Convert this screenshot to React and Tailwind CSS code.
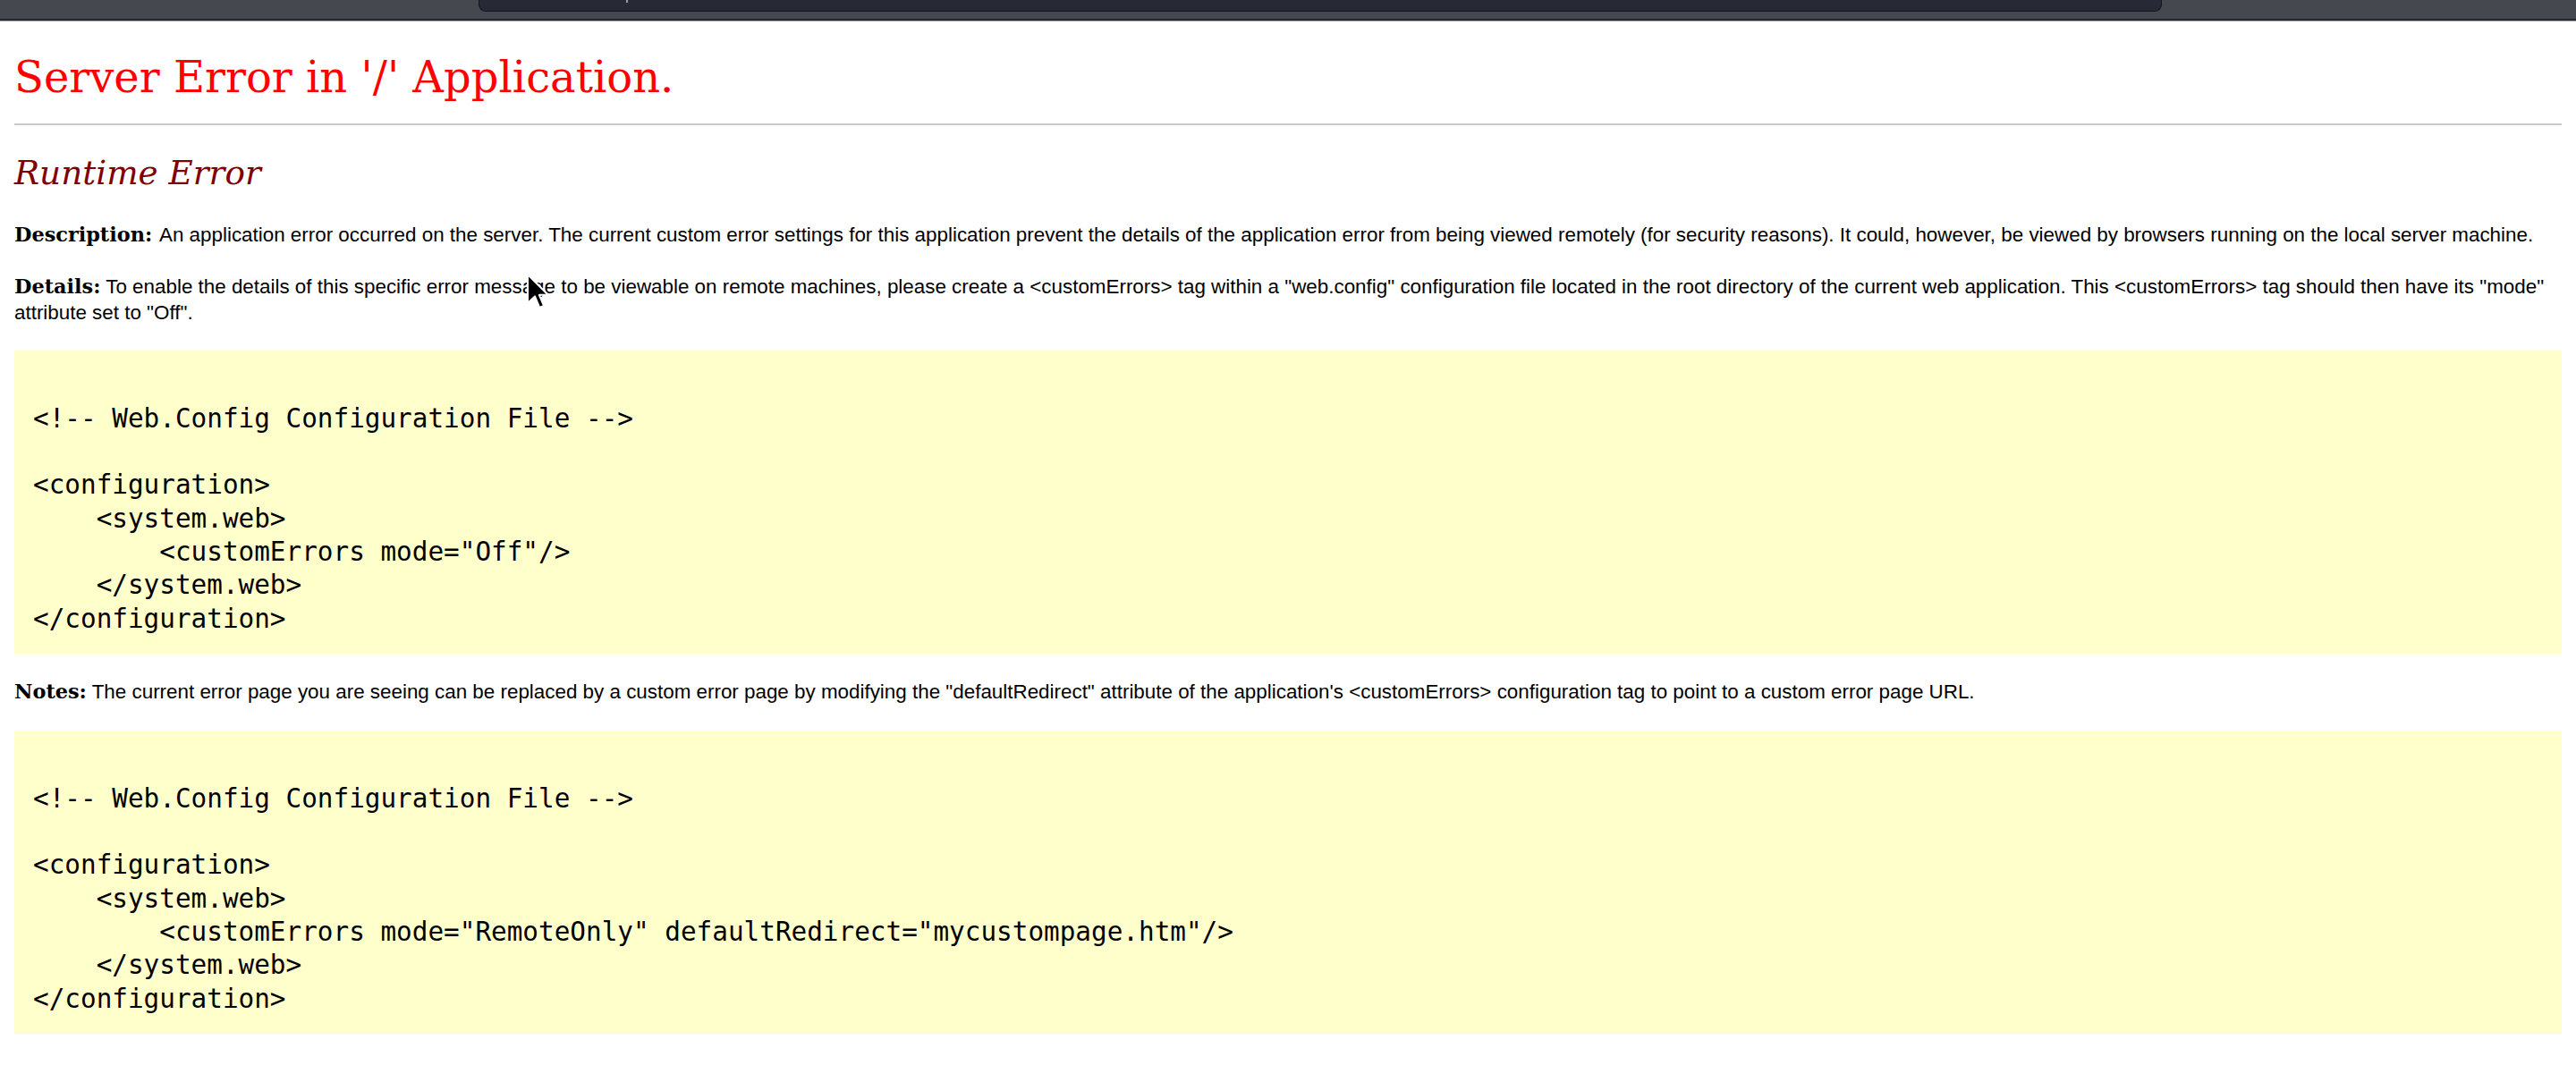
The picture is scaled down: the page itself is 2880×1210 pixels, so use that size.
import React from "react";

const code1 = [
  "",
  "<!-- Web.Config Configuration File -->",
  "",
  "<configuration>",
  "    <system.web>",
  '        <customErrors mode="Off"/>',
  "    </system.web>",
  "</configuration>",
];

const code2 = [
  "",
  "<!-- Web.Config Configuration File -->",
  "",
  "<configuration>",
  "    <system.web>",
  '        <customErrors mode="RemoteOnly" defaultRedirect="mycustompage.htm"/>',
  "    </system.web>",
  "</configuration>",
];

function CodeBlock({ lines }) {
  return (
    <div className="bg-[#ffffcc] pt-[20px] pb-[20px] pl-[21px] pr-[21px] font-['DejaVu_Sans_Mono',monospace] text-[29.33px] leading-[37.33px] text-black">
      {lines.map((l, i) => (
        <div key={i} className="h-[37.33px] whitespace-pre">
          {l}
        </div>
      ))}
    </div>
  );
}

function Label({ children }) {
  return <b className="font-['DejaVu_Serif',serif] font-bold text-black">{children}</b>;
}

export default function App() {
  return (
    <div className="relative min-h-screen w-full bg-white">
      {/* browser chrome remnant */}
      <div className="flex flex-col">
        <div className="flex h-[21px] items-start bg-[#45484f]">
          <div className="ml-[535px] h-[13px] w-[1882px] rounded-b-[8px] border border-t-0 border-[#15161b] bg-[#272a35]">
            <div className="ml-[164px] h-[3px] w-[2px] bg-[#9a9ca3]" />
          </div>
        </div>
        <div className="h-[2px] bg-[#26272c]" />
        <div className="h-[1px] bg-[#a3a3a3]" />
      </div>

      <div className="px-[16px]">
        <h1 className="pt-[34px] font-['DejaVu_Serif',serif] text-[48px] font-normal leading-[56px] text-[#ff0000]">
          Server Error in '/' Application.
        </h1>
        <div className="mt-[24px] h-[2px] w-full bg-[#c9c9c9]" />
        <h2 className="mt-[32.4px] h-[43.4px] font-['DejaVu_Serif',serif] text-[37.33px] font-normal leading-[43.4px] text-[#800000]">
          <i className="italic [font-synthesis:style]">Runtime Error</i>
        </h2>

        <div className="mt-[32.7px] font-['Liberation_Sans',Arial,sans-serif] text-[22.4px] leading-[28.4px] text-black">
          <p>
            <Label>Description: </Label>
            An application error occurred on the server. The current custom error settings for this application prevent the details of the application error from being viewed remotely (for security reasons). It could, however, be viewed by browsers running on the local server machine.
          </p>
          <div className="h-[28.4px]" />
          <p>
            <Label>Details:</Label> To enable the details of this specific error message to be viewable on remote machines, please create a &lt;customErrors&gt; tag within a "web.config" configuration file located in the root directory of the current web application. This &lt;customErrors&gt; tag should then have its "mode" attribute set to "Off".
          </p>
          <div className="h-[28.4px]" />
          <CodeBlock lines={code1} />
          <div className="h-[28.4px]" />
          <p>
            <Label>Notes:</Label> The current error page you are seeing can be replaced by a custom error page by modifying the "defaultRedirect" attribute of the application's &lt;customErrors&gt; configuration tag to point to a custom error page URL.
          </p>
          <div className="h-[28.4px]" />
          <CodeBlock lines={code2} />
        </div>
      </div>

      {/* mouse cursor */}
      <svg
        className="absolute left-[588px] top-[305px]"
        width="26"
        height="42"
        viewBox="0 0 13 21"
      >
        <path
          d="M1 1 L1 17 L5 13.2 L7.6 19.4 L10 18.4 L7.4 12.4 L12.4 12.4 Z"
          fill="#000"
          stroke="#fff"
          strokeWidth="1"
          strokeLinejoin="round"
        />
      </svg>
    </div>
  );
}
